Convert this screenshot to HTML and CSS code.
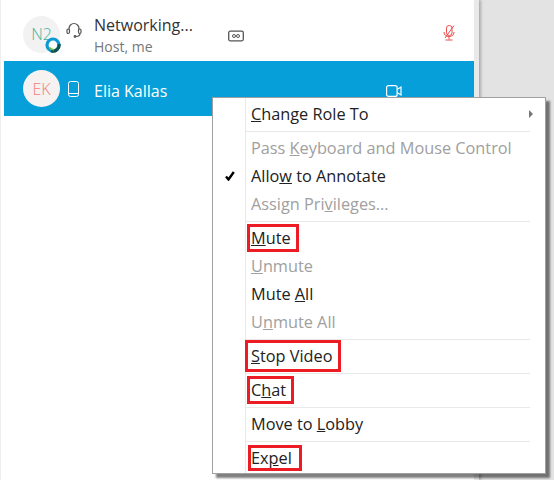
FILE: index.html
```html
<!DOCTYPE html>
<html lang="en">
<head>
    <meta charset="UTF-8">
    <meta name="viewport" content="width=device-width, initial-scale=1.0">
    <title>Participant Menu</title>
    <link rel="stylesheet" href="styles.css">
</head>
<body>
    <!-- Participant list -->
    <div class="panel">
        <div class="row row-host">
            <div class="avatar avatar-host">
                N2
                <svg class="badge" width="16" height="16" viewBox="0 0 16 16">
                    <circle cx="8" cy="8" r="6" fill="#fff" stroke="#0c9ad6" stroke-width="3.200"/>
                    <path d="M14 7a6 6 0 0 1-8 6.700" fill="none" stroke="#12524f" stroke-width="3.200"/>
                    <path d="M4.500 10.500a4.500 4.500 0 0 0 4.500 2" fill="none" stroke="#7dbb3c" stroke-width="1.600"/>
                </svg>
            </div>
            <svg class="device" width="16" height="16" viewBox="0 0 16 16" fill="none" stroke="#555" stroke-width="1.200">
                <path d="M3 7.500V6.500a5 5 0 0 1 10 0v1"/>
                <rect x="1" y="7" width="2.500" height="4.500" rx="1.200"/>
                <rect x="12.500" y="7" width="2.500" height="4.500" rx="1.200"/>
                <path d="M14 11.500c0 2-1.500 3-4 3"/>
                <circle cx="9" cy="14.500" r="0.800"/>
            </svg>
            <div class="name-block">
                <div class="name">Networking...</div>
                <div class="role">Host, me</div>
            </div>
            <svg class="cc" width="16" height="12" viewBox="0 0 16 12" fill="none" stroke="#555">
                <rect x="0.700" y="1.200" width="14.600" height="9.600" rx="1.500" stroke-width="1.300"/>
                <circle cx="6" cy="6" r="1.500" stroke-width="1"/>
                <circle cx="10" cy="6" r="1.500" stroke-width="1"/>
            </svg>
            <svg class="mic" width="12" height="16" viewBox="0 0 12 16" fill="none" stroke="#ee4b4b" stroke-width="1">
                <rect x="3.500" y="0.500" width="5.500" height="10" rx="2.700"/>
                <path d="M1 7c0 3 2 4.500 5 4.500S11 10 11 7M6 11.500v3M2.500 15h7M11 0.500L2 13"/>
            </svg>
        </div>
        <div class="row row-selected">
            <div class="avatar avatar-guest">EK</div>
            <svg class="device" width="16" height="16" viewBox="0 0 16 16" fill="none" stroke="#fff" stroke-width="1">
                <rect x="2.500" y="0.500" width="10" height="15" rx="2"/>
                <path d="M2.500 12.500h10"/>
            </svg>
            <div class="name-block">
                <div class="name">Elia Kallas</div>
            </div>
            <svg class="camera" width="16" height="12" viewBox="0 0 16 12" fill="none" stroke="#fff" stroke-width="1.200">
                <rect x="0.600" y="0.600" width="10.500" height="10.800" rx="2"/>
                <path d="M11 4.500l4-2.500v8l-4-2.500"/>
            </svg>
        </div>
    </div>
    <div class="scroll-edge"></div>

    <!-- Context menu -->
    <div class="menu">
        <div class="item item-first">
            <span><u>C</u>hange Role To</span>
            <span class="arrow"></span>
        </div>
        <div class="sep"></div>
        <div class="item disabled"><span>Pass <u>K</u>eyboard and Mouse Control</span></div>
        <div class="item">
            <svg class="check" width="10" height="10" viewBox="0 0 10 10" fill="none" stroke="#000" stroke-width="2.400">
                <path d="M1 5.500L3.500 8.500L8.800 1"/>
            </svg>
            <span>Allo<u>w</u> to Annotate</span>
        </div>
        <div class="item disabled"><span>Assign Pri<u>v</u>ileges...</span></div>
        <div class="sep"></div>
        <div class="item"><span class="mark mark-mute"><u>M</u>ute</span></div>
        <div class="item disabled"><span><u>U</u>nmute</span></div>
        <div class="item"><span>Mute <u>A</u>ll</span></div>
        <div class="item disabled"><span>U<u>n</u>mute All</span></div>
        <div class="sep"></div>
        <div class="item"><span class="mark mark-video"><u>S</u>top Video</span></div>
        <div class="sep"></div>
        <div class="item"><span class="mark mark-chat">C<u>h</u>at</span></div>
        <div class="sep"></div>
        <div class="item"><span>Move to <u>L</u>obby</span></div>
        <div class="sep"></div>
        <div class="item"><span class="mark mark-expel">Ex<u>p</u>el</span></div>
    </div>
</body>
</html>
```

FILE: styles.css
```css
/* Global Styles */
* {
    margin: 0;
    padding: 0;
    box-sizing: border-box;
    font-family: 'Open Sans', 'Noto Sans', sans-serif;
}

html, body {
    height: 480px;
    overflow: hidden;
}

body {
    display: flex;
    position: relative;
    background-color: #e3e3e3;
    width: 554px;
}

/* Participant list */
.panel {
    width: 474px;
    height: 480px;
    padding-left: 3px;
    border-left: 1px solid #eee;
    background-color: #fff;
}

.scroll-edge {
    width: 5px;
    background-color: #e9e9e9;
    box-shadow: 2px 0 3px rgba(0, 0, 0, 0.25);
}

.row {
    display: flex;
    align-items: center;
    padding-left: 19px;
}

.row-host {
    height: 61px;
}

.row-selected {
    height: 55px;
    background-color: #069fd9;
    color: #fff;
}

.avatar {
    display: flex;
    position: relative;
    align-items: center;
    justify-content: center;
    flex: none;
    width: 37px;
    height: 37px;
    border-radius: 50%;
    font-size: 16px;
    font-weight: 300;
}

.avatar-host {
    margin-top: 7px;
    background-color: #f2f2f2;
    color: #3fb39b;
}

.avatar-guest {
    background-color: #f7f2f2;
    color: #f27f7a;
}

.badge {
    position: absolute;
    right: -1px;
    bottom: 0;
}

.device {
    flex: none;
    margin-left: 6px;
}

.row-host .device {
    margin-top: -1px;
}

.name-block {
    width: 134px;
    margin-left: 12px;
    white-space: nowrap;
}

.name {
    font-size: 16px;
    line-height: 22px;
}

.row-host .name {
    color: #333;
}

.role {
    font-size: 14px;
    line-height: 22px;
    color: #777;
}

.row-host .name-block {
    padding-top: 11px;
}

.row-selected .name-block {
    padding-top: 5px;
}

.cc {
    flex: none;
    margin-top: 11px;
}

.mic {
    flex: none;
    margin-left: 199px;
    margin-top: 4px;
}

.camera {
    flex: none;
    margin-left: 158px;
    margin-top: 4px;
}

/* Context menu */
.menu {
    position: absolute;
    left: 212px;
    top: 97px;
    width: 334px;
    height: 377px;
    padding: 1px 1px 0 0;
    background-color: #fff;
    border: 1px solid #a0a0a0;
    box-shadow: 4px 4px 2px rgba(0, 0, 0, 0.5);
    background-image: linear-gradient(#e8e8e8, #e8e8e8);
    background-size: 1px 100%;
    background-position: 32px 0;
    background-repeat: no-repeat;
}

.item {
    display: flex;
    position: relative;
    align-items: center;
    height: 28px;
    padding-left: 38px;
    font-size: 16.300px;
    color: #222;
    white-space: nowrap;
}

.item-first {
    height: 29px;
    padding-top: 1px;
}

.disabled {
    color: #a0a0a0;
}

.sep {
    height: 1px;
    margin: 3px 14px 2px 32px;
    background-color: #e8e8e8;
}

.check {
    position: absolute;
    left: 12px;
}

.arrow {
    position: absolute;
    right: 11px;
    border-left: 4px solid #777;
    border-top: 4px solid transparent;
    border-bottom: 4px solid transparent;
}

/* Red annotation boxes */
.mark {
    display: flex;
    align-items: center;
    flex: none;
    border: 3px solid #ed1c24;
}

.mark-mute {
    width: 52px;
    height: 28px;
    margin-left: -4px;
    padding-left: 1px;
}

.mark-video {
    width: 96px;
    height: 32px;
    margin-left: -6px;
    padding-left: 3px;
}

.mark-chat {
    width: 47px;
    height: 28px;
    margin-left: -4px;
    padding-left: 1px;
}

.mark-expel {
    width: 54px;
    height: 26px;
    margin-left: -3px;
}
```
